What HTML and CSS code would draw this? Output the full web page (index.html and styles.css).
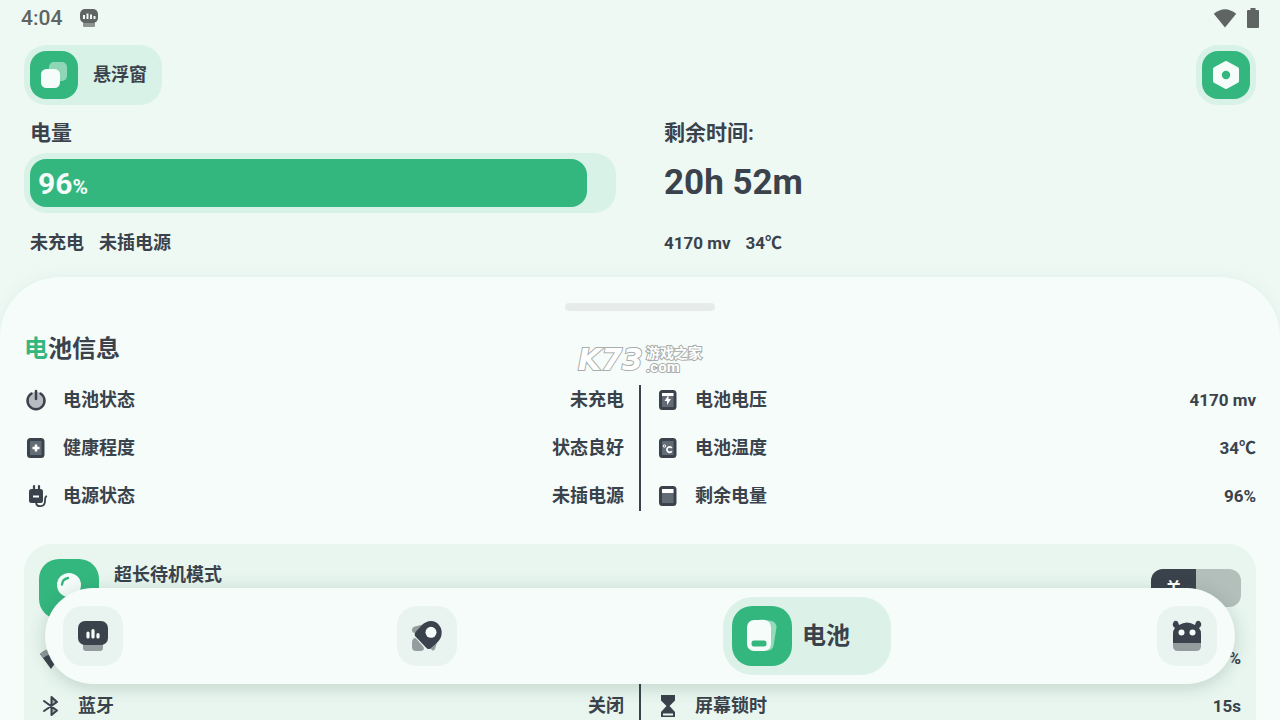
FILE: index.html
```html
<!DOCTYPE html>
<html lang="zh-CN">
<head>
<meta charset="utf-8">
<meta name="viewport" content="width=device-width, initial-scale=1">
<title>电池</title>
<link rel="stylesheet" href="styles.css">
</head>
<body>
<div class="app">
  <div class="status">
    <span class="status-time">4:04</span>
    <svg class="status-app" width="18" height="18" viewBox="0 0 18 18"><rect x="3" y="12" width="12" height="6" rx="1" fill="#8d9490"/><rect width="18" height="14" rx="5" fill="#5f6562"/><path d="M4 6v4M7.500 4.500v5.500M11 5.500v4.500M14.500 7v3" stroke="#eef9f4" stroke-width="2"/></svg>
    <span class="status-right">
      <svg width="24" height="19" viewBox="0 0 24 19"><path d="M.8 4.800Q12-4.200 23.200 4.800L12 18.500Z" fill="#5f6562"/></svg>
      <svg width="12" height="20" viewBox="0 0 12 20"><path d="M3.500 0h5v2H11q1 0 1 1v16q0 1-1 1H1q-1 0-1-1V3q0-1 1-1h2.500Z" fill="#5f6562"/></svg>
    </span>
  </div>

  <header class="header">
    <button class="pill" type="button">
      <span class="tile">
        <svg width="28" height="28" viewBox="0 0 28 28"><rect x="9" y="1" width="18" height="19" rx="5" fill="#8fd6b6"/><rect x="1" y="8" width="19" height="19" rx="5.500" fill="#f5fcf9"/></svg>
      </span>
      <span class="pill-text">悬浮窗</span>
    </button>
    <button class="pill" type="button" aria-label="设置">
      <span class="tile">
        <svg width="28" height="30" viewBox="0 0 28 30"><path d="M14 3L25 9V21L14 27L3 21V9Z" fill="#f5fcf9" stroke="#f5fcf9" stroke-width="4" stroke-linejoin="round"/><circle cx="14" cy="15" r="4.200" fill="#34b77f"/></svg>
      </span>
    </button>
  </header>

  <section class="summary">
    <div class="summary-col">
      <h2 class="label">电量</h2>
      <div class="gauge" role="progressbar" aria-label="电量" aria-valuenow="96" aria-valuemin="0" aria-valuemax="100">
        <div class="gauge-fill" style="width:96%">96<span class="percent">%</span></div>
      </div>
      <p class="facts"><span>未充电</span><span>未插电源</span></p>
    </div>
    <div class="summary-col">
      <h2 class="label">剩余时间:</h2>
      <div class="time">20h 52m</div>
      <p class="facts num"><span>4170 mv</span><span>34℃</span></p>
    </div>
  </section>

  <main class="sheet">
    <div class="handle"></div>
    <div class="mark"><span class="mark-logo">K73</span><span class="mark-side"><span>游戏之家</span><span class="mark-com">.com</span></span></div>
    <h1 class="heading"><span class="accent">电</span>池信息</h1>

    <div class="pair">
      <dl class="list">
        <div class="row">
          <svg class="icon" viewBox="0 0 24 24"><circle cx="12" cy="12.500" r="8.500" fill="#b7bcc2"/><path d="M7.500 5.500A8.500 8.500 0 1 0 16.500 5.500" fill="none" stroke="#3a424b" stroke-width="2.500" stroke-linecap="round"/><path d="M12 3v8" stroke="#3a424b" stroke-width="2.500" stroke-linecap="round"/></svg>
          <dt>电池状态</dt><dd>未充电</dd>
        </div>
        <div class="row">
          <svg class="icon" viewBox="0 0 24 24"><rect x="4.500" y="3.500" width="14.500" height="17" rx="2" fill="#636b75" stroke="#3a424b" stroke-width="3"/><path d="M12 8.500v7M8.500 12h7" stroke="#fff" stroke-width="2.500"/></svg>
          <dt>健康程度</dt><dd>状态良好</dd>
        </div>
        <div class="row">
          <svg class="icon" viewBox="0 0 24 24"><rect x="5" y="5" width="14" height="14" rx="2.500" fill="#3a424b"/><path d="M10 2v4M15 2v4" stroke="#3a424b" stroke-width="2.200" stroke-linecap="round"/><path d="M9 12.500h6" stroke="#fff" stroke-width="2"/><path d="M12 19C13 23.500 20.500 23.500 21 17.500V16Q21 12.500 23 12" fill="none" stroke="#3a424b" stroke-width="1.800"/></svg>
          <dt>电源状态</dt><dd>未插电源</dd>
        </div>
      </dl>
      <dl class="list">
        <div class="row">
          <svg class="icon" viewBox="0 0 24 24"><rect x="4.500" y="3.500" width="14.500" height="17" rx="2" fill="#636b75" stroke="#3a424b" stroke-width="3"/><path d="M6 5h11.500v3H6Z" fill="#fff"/><path d="M12.500 7L8.500 13h2.500v4L15 11h-2.500Z" fill="#fff"/></svg>
          <dt>电池电压</dt><dd class="num">4170 mv</dd>
        </div>
        <div class="row">
          <svg class="icon" viewBox="0 0 24 24"><rect x="4.500" y="3.500" width="14.500" height="17" rx="2" fill="#636b75" stroke="#3a424b" stroke-width="3"/><circle cx="8.500" cy="10" r="1.200" fill="none" stroke="#fff"/><path d="M15.800 12A2.700 2.700 0 1 0 15.800 15.200" fill="none" stroke="#fff" stroke-width="1.700"/></svg>
          <dt>电池温度</dt><dd class="num">34℃</dd>
        </div>
        <div class="row">
          <svg class="icon" viewBox="0 0 24 24"><rect x="4.500" y="3.500" width="14.500" height="17" rx="2" fill="#636b75" stroke="#3a424b" stroke-width="3"/><path d="M6 5h11.500v4H6Z" fill="#fff"/></svg>
          <dt>剩余电量</dt><dd class="num">96%</dd>
        </div>
      </dl>
    </div>

    <section class="card">
      <div class="card-head">
        <span class="tile tile-large">
          <svg width="36" height="36" viewBox="0 0 36 36"><circle cx="18" cy="14" r="12" fill="#f5fcf9"/><path d="M11 13.500Q11.500 8 17 7" fill="none" stroke="#34b77f" stroke-width="2.500" stroke-linecap="round"/><rect x="12" y="27" width="12" height="6" rx="2" fill="#8fd6b6"/></svg>
        </span>
        <label class="card-title" for="standby">超长待机模式</label>
        <span class="switch">
          <input class="switch-input" id="standby" type="checkbox">
          <span class="switch-knob">关</span>
        </span>
      </div>
      <div class="pair">
        <dl class="list">
          <div class="row">
            <svg class="icon" viewBox="0 0 24 24"><path d="M1 8Q12-2 23 8L12 23Z" fill="#3a424b"/><path d="M1 8Q12-2 23 8L20 12Q12 5 4 12Z" fill="#8f979b"/></svg>
          </div>
          <div class="row">
            <svg class="icon" viewBox="0 0 24 24"><path d="M12.500 3.500L18 8L12.500 12ZM12.500 12L18 16.500L12.500 21Z" fill="#a4aaae"/><path d="M5 7L18 16.500L12.500 21V3L18 8L5 17" fill="none" stroke="#3a424b" stroke-width="2" stroke-linejoin="round" stroke-linecap="round"/></svg>
            <dt>蓝牙</dt><dd>关闭</dd>
          </div>
        </dl>
        <dl class="list">
          <div class="row">
            <dd class="num">%</dd>
          </div>
          <div class="row">
            <svg class="icon" viewBox="0 0 24 24"><path d="M5 1h14v5.500L13.500 12L19 18v5H5v-5L10.500 12L5 6.500Z" fill="#3a424b"/><path d="M7 19.500h10v2H7Z" fill="#e8f6ef"/></svg>
            <dt>屏幕锁时</dt><dd class="num">15s</dd>
          </div>
        </dl>
      </div>
    </section>
  </main>

  <nav class="nav">
    <button class="nav-item nav-first" type="button" aria-label="概览">
      <span class="nav-tile">
        <svg width="36" height="36" viewBox="0 0 36 36"><rect x="8" y="24" width="20" height="9" rx="3" fill="#949c9e"/><rect x="3" y="3" width="30" height="24" rx="7" fill="#3a424b"/><path d="M13 15v4M18 12.500v6.500M23 16.500v2.500" stroke="#f5fcf9" stroke-width="3.200" stroke-linecap="round"/></svg>
      </span>
    </button>
    <button class="nav-item" type="button" aria-label="加速">
      <span class="nav-tile">
        <svg width="36" height="36" viewBox="0 0 36 36"><path d="M3 12Q3 9 6 8.500L14 6.500L6 15Q3 15 3 12ZM29 21L26 31Q24 34 22 31L20.500 29Z" fill="#949c9e"/><path d="M5 20Q3 22 3 24V29Q3 33 7 33H12Q16 32.500 14.500 29L7.500 21Q6 19.500 5 20Z" fill="#949c9e"/><path d="M12.500 7.500C18 1.500 26 1.500 30 7Q34 12 32 19C30 24 25 27 21.500 30.500Q19 32 17 29.500L6 18Q5 16 6.500 14Z" fill="#3a424b"/><circle cx="22" cy="14.300" r="5.500" fill="#f5fcf9"/></svg>
      </span>
    </button>
    <button class="nav-item nav-active" type="button" aria-current="page">
      <span class="nav-tile">
        <svg width="36" height="36" viewBox="0 0 36 36"><rect x="10" y="2" width="21" height="30" rx="6" fill="#94dabb" transform="rotate(9 20 18)"/><rect x="3" y="2" width="24" height="31" rx="7" fill="#f5fcf9"/><rect x="7.500" y="22.500" width="15" height="6" rx="2.500" fill="#34b77f"/></svg>
      </span>
      <span>电池</span>
    </button>
    <button class="nav-item" type="button" aria-label="系统">
      <span class="nav-tile">
        <svg width="36" height="36" viewBox="0 0 36 36"><path d="M4 23h28v5q0 5-5 5H9q-5 0-5-5Z" fill="#949c9e"/><path d="M4 25V16Q4 12 6 10Q3 8 4 5Q6 1 9 4L10 7Q18 2 26 7L27 4Q30 1 32 5Q33 8 30 10Q32 12 32 16V25Z" fill="#3a424b"/><circle cx="12.500" cy="14.500" r="3" fill="#f5fcf9"/><circle cx="23.500" cy="14.500" r="3" fill="#f5fcf9"/></svg>
      </span>
    </button>
  </nav>
</div>
</body>
</html>
```
FILE: styles.css
```css
* { box-sizing: border-box; }
:root {
  --ink: #3a424b;
  --green: #34b77f;
  --mint: #d8f2e7;
  --sheet: #f5fcf9;
}
body {
  margin: 0;
  color: var(--ink);
  background: #eef9f4;
  font: 700 18px/24px Roboto, "Noto Sans CJK SC", sans-serif;
}
h1, h2, p, dl, dd { margin: 0; }
svg { display: block; flex: none; }
button {
  border: 0;
  padding: 0;
  background: none;
  color: inherit;
  font: inherit;
  cursor: pointer;
}
.app {
  position: relative;
  display: flex;
  flex-direction: column;
  height: 100vh;
  overflow: hidden;
}
.num { font-size: 17px; }
.status {
  display: flex;
  flex: none;
  align-items: center;
  height: 36px;
  padding: 0 21px;
  color: #5f6562;
}
.status-time { font-size: 21px; font-weight: 500; }
.status-app { margin-left: 18px; }
.status-right {
  display: flex;
  align-items: center;
  gap: 10px;
  margin-left: auto;
}
.header {
  display: flex;
  flex: none;
  justify-content: space-between;
  padding: 9px 24px 0;
}
.pill {
  display: flex;
  align-items: center;
  gap: 15px;
  padding: 6px;
  border-radius: 22px;
  background: var(--mint);
}
.pill-text { padding-right: 9px; }
.tile {
  display: grid;
  flex: none;
  place-items: center;
  width: 48px;
  height: 48px;
  border-radius: 16px;
  background: var(--green);
}
.summary {
  display: grid;
  flex: none;
  grid-template-columns: 1fr 1fr;
  padding-bottom: 22px;
}
.summary-col { padding: 12px 24px 0; }
.label {
  padding-left: 6px;
  font-size: 21px;
  line-height: 32px;
}
.gauge {
  height: 60px;
  margin-top: 4px;
  padding: 6px;
  border-radius: 22px;
  background: var(--mint);
}
.gauge-fill {
  height: 48px;
  padding-left: 8px;
  border-radius: 16px;
  background: var(--green);
  color: var(--sheet);
  font-size: 30px;
  line-height: 50px;
}
.percent { font-size: 21px; }
.facts {
  display: flex;
  gap: 15px;
  margin-top: 18px;
  padding-left: 6px;
}
.time {
  height: 60px;
  margin-top: 4px;
  font-size: 35px;
  line-height: 60px;
}
.summary-col + .summary-col .label,
.summary-col + .summary-col .facts { padding-left: 0; }
.sheet {
  position: relative;
  flex: 1 0 auto;
  padding: 26px 24px 0;
  border-radius: 60px 60px 0 0;
  background: var(--sheet);
  box-shadow: 0 0 16px rgba(40, 90, 70, .06);
}
.handle {
  width: 150px;
  height: 8px;
  margin: 0 auto;
  border-radius: 4px;
  background: #e7ecea;
}
.mark {
  position: absolute;
  top: 68px;
  left: 50%;
  display: flex;
  align-items: center;
  gap: 3px;
  transform: translateX(-50%);
  color: #fff;
  -webkit-text-stroke: 2px #a9adab;
  paint-order: stroke fill;
}
.mark-logo { font: italic 700 30px/30px "DejaVu Sans", sans-serif; }
.mark-side {
  display: grid;
  grid-template-rows: 14px 14px;
  font-size: 14px;
  line-height: 14px;
}
.mark-com { font-size: 15px; }
.heading {
  margin-top: 22px;
  font-size: 24px;
  line-height: 32px;
}
.accent { color: var(--green); }
.pair {
  position: relative;
  display: grid;
  grid-template-columns: 1fr 1fr;
  column-gap: 32px;
}
.pair::before {
  content: "";
  position: absolute;
  top: 9px;
  bottom: 9px;
  left: 50%;
  width: 2px;
  margin-left: -1px;
  background: var(--ink);
}
.heading + .pair { margin-top: 11px; }
.row {
  display: flex;
  align-items: center;
  height: 48px;
}
.row dd { margin-left: auto; }
.icon {
  width: 24px;
  height: 24px;
  margin-right: 15px;
}
.card {
  margin-top: 24px;
  padding: 15px 15px 60px;
  border-radius: 28px;
  background: #e8f6ef;
}
.card-head { display: flex; }
.tile-large { width: 60px; height: 60px; border-radius: 20px; }
.card-title { margin: 4px auto 0 15px; }
.switch {
  position: relative;
  width: 90px;
  height: 38px;
  margin-top: 10px;
}
.switch-input {
  width: 100%;
  height: 100%;
  margin: 0;
  border-radius: 12px;
  background: #b3bfba;
  appearance: none;
}
.switch-knob {
  position: absolute;
  top: 0;
  left: 0;
  width: 50%;
  height: 100%;
  border-radius: 12px 0 0 12px;
  background: var(--ink);
  color: #fff;
  font-size: 16px;
  line-height: 40px;
  text-align: center;
  pointer-events: none;
}
.card .pair { margin-top: 15px; }
.nav {
  position: absolute;
  right: 45px;
  bottom: 36px;
  left: 45px;
  display: flex;
  align-items: center;
  justify-content: space-between;
  height: 96px;
  padding: 0 18px;
  border-radius: 48px;
  background: var(--sheet);
  box-shadow: 0 3px 18px rgba(30, 70, 55, .2);
}
.nav-item {
  display: flex;
  align-items: center;
  gap: 10px;
  font-size: 24px;
}
.nav-first { padding-right: 8px; }
.nav-tile {
  display: grid;
  place-items: center;
  width: 60px;
  height: 60px;
  border-radius: 20px;
  background: #e9f3ef;
}
.nav-active {
  padding: 9px 41px 9px 9px;
  border-radius: 30px;
  background: #dcf2e8;
}
.nav-active .nav-tile { background: var(--green); }
```
